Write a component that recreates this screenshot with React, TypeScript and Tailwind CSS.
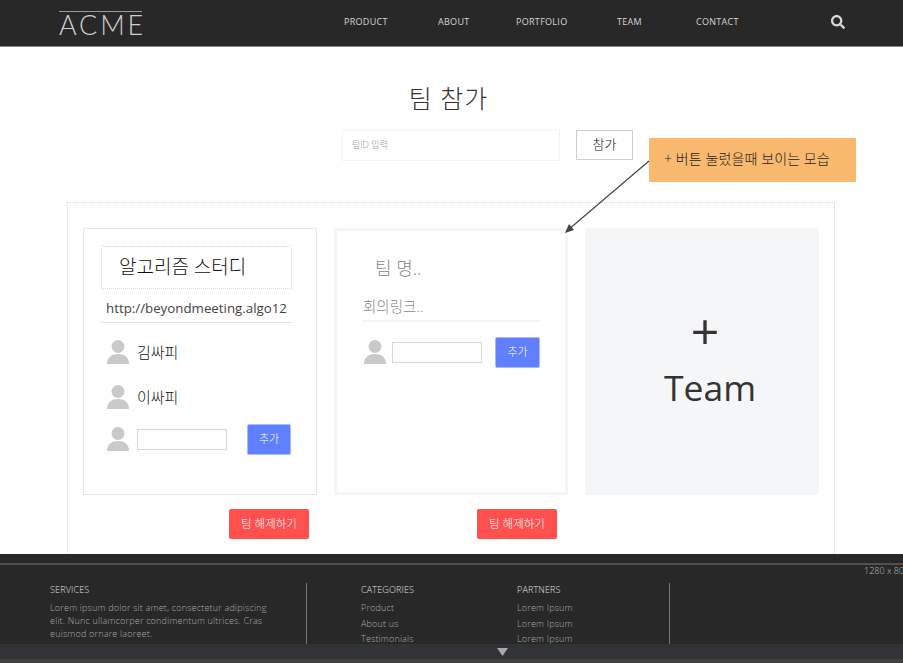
import { FaSearch } from "react-icons/fa";

const FONT = "font-['Open_Sans','Noto_Sans_CJK_KR',sans-serif]";

function Person({ className = "" }: { className?: string }) {
  return (
    <svg width="22" height="24" viewBox="0 0 22 24" className={`shrink-0 ${className}`}>
      <circle cx="11" cy="6.5" r="6.5" fill="#c9c9c9" />
      <path d="M0 24 C0 17 5 14 11 14 C17 14 22 17 22 24 Z" fill="#c9c9c9" />
    </svg>
  );
}

function AddRow({ className, gap, btn }: { className: string; gap: string; btn: string }) {
  return (
    <div className={`flex items-center ${className}`}>
      <Person className="mb-[2px]" />
      <div className={`h-[21px] w-[90px] border border-[#d6d6d6] bg-white ${gap}`} />
      <button className={`flex h-[31px] items-center justify-center rounded-[2px] border border-[#a9b9ff] bg-[#5f7fff] text-[11px] font-light text-white ${btn}`}>
        추가
      </button>
    </div>
  );
}

function Member({ name, className }: { name: string; className: string }) {
  return (
    <div className={`flex items-center gap-2 ${className}`}>
      <Person />
      <span className="text-[15px] leading-6 font-light text-[#111]">{name}</span>
    </div>
  );
}

function Column({ title, items }: { title: string; items: string[] }) {
  return (
    <div>
      <div className="text-[9px] leading-[14px] font-light tracking-[0.15px] text-[#e0e0e0]">{title}</div>
      <ul className="mt-[4px] flex flex-col gap-[2px] text-[9px] leading-[13.5px] font-light tracking-[0.18px] text-[#a8a8a8]">
        {items.map((t, i) => (
          <li key={i}>{t}</li>
        ))}
      </ul>
    </div>
  );
}

export default function App() {
  return (
    <div className={`relative flex h-[663px] w-[903px] flex-col overflow-hidden bg-white ${FONT}`}>
      <header className="flex h-[47px] shrink-0 items-center border-b border-[#8a8a8a] bg-[#282828] pl-[59px]">
        <div className="w-[83px] self-start pt-[11px]">
          <div className="border-t border-[#9a9a9a] font-['Lato',sans-serif] text-[27px] leading-[26px] font-light tracking-[2.8px] whitespace-nowrap text-[#cfcfcf]">
            ACME
          </div>
        </div>
        <nav className="ml-[202px] flex items-center pb-[3px] text-[9px] tracking-[0.3px] text-[#d6d6d6]">
          <span className="w-[94px]">PRODUCT</span>
          <span className="w-[78px]">ABOUT</span>
          <span className="w-[101px]">PORTFOLIO</span>
          <span className="w-[79px]">TEAM</span>
          <span className="w-[135px]">CONTACT</span>
        </nav>
        <FaSearch className="mb-[3px] text-[14px] text-[#d8d8d8]" />
      </header>

      <main className="relative h-[507px] shrink-0 overflow-hidden">
        <h1 className="mt-[33px] pr-[6px] text-center text-[25px] leading-9 font-light tracking-[1px] text-[#333]">팀 참가</h1>
        <div className="mt-[13px] ml-[342px] flex items-center gap-4">
          <div className="flex h-8 w-[218px] items-center border border-[#f3f3f3] pl-[9px] text-[9px] font-light text-[#999]">
            팀ID 입력
          </div>
          <button className="flex h-[30px] w-[57px] items-center justify-center border border-[#cfcfcf] text-[13px] font-light text-[#111]">
            참가
          </button>
        </div>

        <div className="mt-[41px] ml-[67px] h-[400px] w-[768px] border border-dotted border-[#d5d5d5] px-[15px] pt-[25px]">
          <div className="grid grid-cols-3 gap-[17px]">
            <section className="h-[267px] border border-[#e6e6e6] pt-[17px] pl-[17px]">
              <div className="flex h-[43px] w-[191px] items-center border border-dotted border-[#d5d5d5] pl-[17px] text-[19px] font-light text-[#111]">
                알고리즘 스터디
              </div>
              <div className="mt-[8px] w-[191px] border-b border-[#e2e2e2] pb-[3px] pl-[5px] text-[13.3px] leading-[22px] whitespace-nowrap text-[#444]">
                http://beyondmeeting.algo12
              </div>
              <Member name="김싸피" className="mt-[17px] ml-[6px]" />
              <Member name="이싸피" className="mt-[21px] ml-[6px]" />
              <AddRow className="mt-[15px] ml-[6px]" gap="ml-2" btn="ml-5 w-[44px]" />
            </section>

            <section className="h-[267px] border-[3px] border-[#f5f5f6] pt-[21px] pl-[26px]">
              <div className="pl-3 text-[18px] leading-[32px] font-light text-[#888]">팀 명..</div>
              <div className="mt-[12px] w-[177px] border-b-2 border-[#f3f3f3] pb-[2px] text-[14.5px] leading-[22px] font-light text-[#888]">
                회의링크..
              </div>
              <AddRow className="mt-[15px] ml-[1px]" gap="ml-[6px]" btn="ml-[13px] w-[45px]" />
            </section>

            <section className="flex h-[267px] flex-col items-center rounded-[2px] bg-[#f5f6f8] pt-[70px] text-[#333]">
              <div className="ml-[6px] text-[50px] leading-[66px]">+</div>
              <div className="ml-[16px] text-[35.5px] leading-[46px]">Team</div>
            </section>
          </div>
          <div className="mt-[14px] grid grid-cols-3 gap-[17px]">
            <button className="mr-2 flex h-[30px] w-20 items-center justify-center justify-self-end rounded-[2px] bg-[#ff5050] text-[11.5px] font-light text-white">
              팀 해제하기
            </button>
            <button className="mr-[11px] flex h-[30px] w-20 items-center justify-center justify-self-end rounded-[2px] bg-[#ff5050] text-[11.5px] font-light text-white">
              팀 해제하기
            </button>
          </div>
        </div>

        <div className="absolute top-[91px] left-[649px] flex h-[44px] w-[207px] items-center bg-[#f9b96f] pb-[3px] pl-[15px] text-[14px] font-light tracking-[0.1px] text-[#222]">
          + 버튼 눌렀을때 보이는 모습
        </div>
        <svg className="absolute top-[110px] left-[560px]" width="92" height="80" viewBox="0 0 92 80" fill="none">
          <path d="M89 4 L8 73" stroke="#444" strokeWidth="1.2" />
          <path d="M5 76 L9 67 L14 73 Z" fill="#444" />
        </svg>
      </main>

      <footer className="relative flex h-[109px] shrink-0 flex-col bg-[#282828]">
        <div className="h-[9px]" />
        <div className="h-[2px] bg-[#505050]" />
        <div className="flex h-[79px] overflow-hidden pt-[18px] pl-[50px]">
          <div className="w-[257px] border-r border-[#777] pr-[34px]">
            <div className="text-[9px] leading-[14px] font-light tracking-[0.15px] text-[#e0e0e0]">SERVICES</div>
            <p className="mt-[4px] text-[9px] leading-[13px] font-light tracking-[0.2px] text-[#a8a8a8]">
              Lorem ipsum dolor sit amet, consectetur adipiscing elit. Nunc ullamcorper condimentum ultrices. Cras euismod ornare laoreet.
            </p>
          </div>
          <div className="w-[210px] pl-[54px]">
            <Column title="CATEGORIES" items={["Product", "About us", "Testimonials"]} />
          </div>
          <div className="w-[153px] border-r border-[#777]">
            <Column title="PARTNERS" items={["Lorem Ipsum", "Lorem Ipsum", "Lorem Ipsum"]} />
          </div>
        </div>
        <div className="flex h-[15px] items-center justify-center bg-[#323338] pl-[101px]">
          <svg width="11" height="8" viewBox="0 0 11 8">
            <path d="M0 0 H11 L5.5 8 Z" fill="#a9a9a9" />
          </svg>
        </div>
        <div className="h-[4px] bg-[#404040]" />
        <span className="absolute top-[10px] left-[864px] text-[9px] font-light whitespace-nowrap text-[#bbb]">1280 x 800</span>
      </footer>
    </div>
  );
}
